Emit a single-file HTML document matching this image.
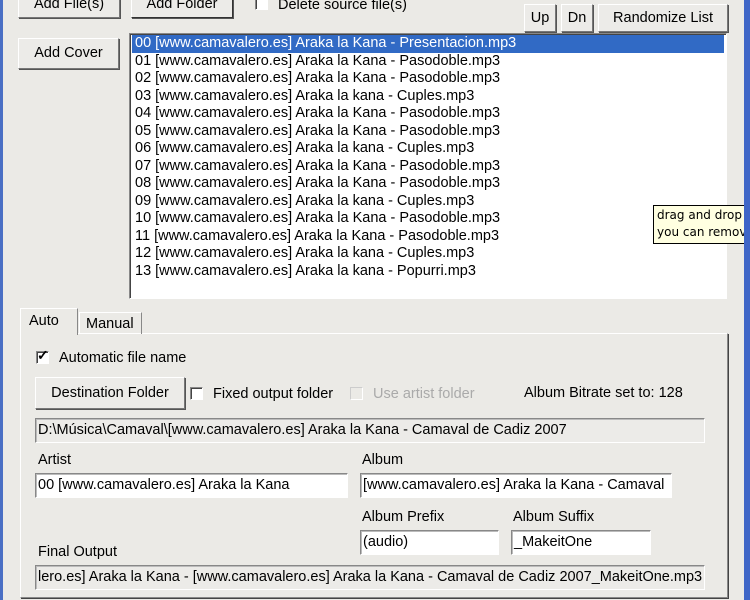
<!DOCTYPE html>
<html><head><meta charset="utf-8"><style>
*{box-sizing:border-box;margin:0;padding:0}
body{width:750px;height:600px;background:#ebeae6;position:relative;overflow:hidden;font-family:"Liberation Sans",sans-serif;font-size:14.5px;color:#000;letter-spacing:0}
.a{position:absolute;white-space:nowrap}
.btn{position:absolute;background:#ecebe8;border:1px solid;border-color:#fff #777 #777 #fff;box-shadow:1px 1px 0 #555;text-align:center}
.inp{position:absolute;background:#fff;border:1px solid;border-color:#888 #fff #fff #888;box-shadow:inset 1px 1px 0 #bbb;padding:3px 2px;white-space:nowrap;overflow:hidden}
.ro{background:#ecebe8}
.cb{position:absolute;width:13px;height:13px;background:#fff;border:1px solid;border-color:#888 #fff #fff #888;box-shadow:inset 1px 1px 0 #444}
.list{position:absolute;left:129px;top:33px;width:598px;height:266px;background:#fff;border:1px solid;border-color:#888 #fff #fff #888;box-shadow:inset 1px 1px 0 #444}
.row{height:17.5px;line-height:17.5px;padding-left:5px;white-space:nowrap}
.sel{background:#316ac5;color:#fff;margin:1px 2px 0 2px;padding-left:3px}
</style></head><body>
<div class="a" style="left:0;top:0;width:3px;height:600px;background:#4a6fc4"></div>
<div class="a" style="left:744px;top:0;width:6px;height:600px;background:#3f66c7"></div>

<div class="btn" style="left:18px;top:-8px;width:102px;height:26px;line-height:22px">Add File(s)</div>
<div class="btn" style="left:131px;top:-8px;width:102px;height:26px;line-height:22px;border-color:#fff #333 #333 #fff">Add Folder</div>
<div class="cb" style="left:255px;top:-3px"></div>
<div class="a" style="left:278px;top:-3px">Delete source file(s)</div>
<div class="btn" style="left:524px;top:4px;width:32px;height:28px;line-height:26px">Up</div>
<div class="btn" style="left:561px;top:4px;width:32px;height:28px;line-height:26px">Dn</div>
<div class="btn" style="left:598px;top:4px;width:130px;height:28px;line-height:26px">Randomize List</div>
<div class="btn" style="left:18px;top:38px;width:101px;height:31px;line-height:29px">Add Cover</div>

<div class="list">
<div class="row sel">00 [www.camavalero.es] Araka la Kana - Presentacion.mp3</div>
<div class="row">01 [www.camavalero.es] Araka la Kana - Pasodoble.mp3</div>
<div class="row">02 [www.camavalero.es] Araka la Kana - Pasodoble.mp3</div>
<div class="row">03 [www.camavalero.es] Araka la kana - Cuples.mp3</div>
<div class="row">04 [www.camavalero.es] Araka la Kana - Pasodoble.mp3</div>
<div class="row">05 [www.camavalero.es] Araka la Kana - Pasodoble.mp3</div>
<div class="row">06 [www.camavalero.es] Araka la kana - Cuples.mp3</div>
<div class="row">07 [www.camavalero.es] Araka la Kana - Pasodoble.mp3</div>
<div class="row">08 [www.camavalero.es] Araka la Kana - Pasodoble.mp3</div>
<div class="row">09 [www.camavalero.es] Araka la kana - Cuples.mp3</div>
<div class="row">10 [www.camavalero.es] Araka la Kana - Pasodoble.mp3</div>
<div class="row">11 [www.camavalero.es] Araka la Kana - Pasodoble.mp3</div>
<div class="row">12 [www.camavalero.es] Araka la kana - Cuples.mp3</div>
<div class="row">13 [www.camavalero.es] Araka la kana - Popurri.mp3</div>
</div>

<div class="a" style="left:653px;top:205px;width:91px;height:39px;background:#ffffe1;border:1px solid #000;border-right:none;font-family:'DejaVu Sans',sans-serif;font-size:12px;letter-spacing:0;line-height:17px;padding:1px 0 0 3px;overflow:hidden">drag and drop<br>you can remove</div>

<div class="a" style="left:20px;top:333px;width:708px;height:265px;border:1px solid;border-color:#fff #888 #888 #fff;box-shadow:1px 1px 0 #444"></div>
<div class="a" style="left:20px;top:308px;width:58px;height:27px;background:#ebeae6;border:1px solid;border-color:#fff #888 transparent #fff;border-bottom:none;padding:4px 0 0 8px">Auto</div>
<div class="a" style="left:79px;top:312px;width:63px;height:22px;border:1px solid;border-color:#fff #888 transparent #fff;border-bottom:none;padding:3px 0 0 6px">Manual</div>

<div class="cb" style="left:36px;top:351px"></div>
<div class="a" style="left:37px;top:347px;font-size:14px;font-weight:bold">✓</div>
<div class="a" style="left:59px;top:350px">Automatic file name</div>
<div class="btn" style="left:35px;top:377px;width:150px;height:32px;line-height:30px">Destination Folder</div>
<div class="cb" style="left:190px;top:387px"></div>
<div class="a" style="left:213px;top:386px">Fixed output folder</div>
<div class="cb" style="left:350px;top:387px;box-shadow:none;border-color:#ccc #fff #fff #ccc;background:#ebeae6"></div>
<div class="a" style="left:373px;top:386px;color:#aaa">Use artist folder</div>
<div class="a" style="left:524px;top:385px">Album Bitrate set to: 128</div>
<div class="inp ro" style="left:35px;top:418px;width:670px;height:25px">D:\Música\Camaval\[www.camavalero.es] Araka la Kana - Camaval de Cadiz 2007</div>

<div class="a" style="left:38px;top:452px">Artist</div>
<div class="a" style="left:362px;top:452px">Album</div>
<div class="inp" style="left:35px;top:473px;width:313px;height:25px">00 [www.camavalero.es] Araka la Kana</div>
<div class="inp" style="left:360px;top:473px;width:312px;height:25px">[www.camavalero.es] Araka la Kana - Camaval</div>
<div class="a" style="left:362px;top:509px">Album Prefix</div>
<div class="a" style="left:513px;top:509px">Album Suffix</div>
<div class="inp" style="left:360px;top:530px;width:139px;height:25px">(audio)</div>
<div class="inp" style="left:511px;top:530px;width:140px;height:25px">_MakeitOne</div>
<div class="a" style="left:38px;top:544px">Final Output</div>
<div class="inp ro" style="left:35px;top:565px;width:670px;height:25px">lero.es] Araka la Kana - [www.camavalero.es] Araka la Kana - Camaval de Cadiz 2007_MakeitOne.mp3</div>
</body></html>
